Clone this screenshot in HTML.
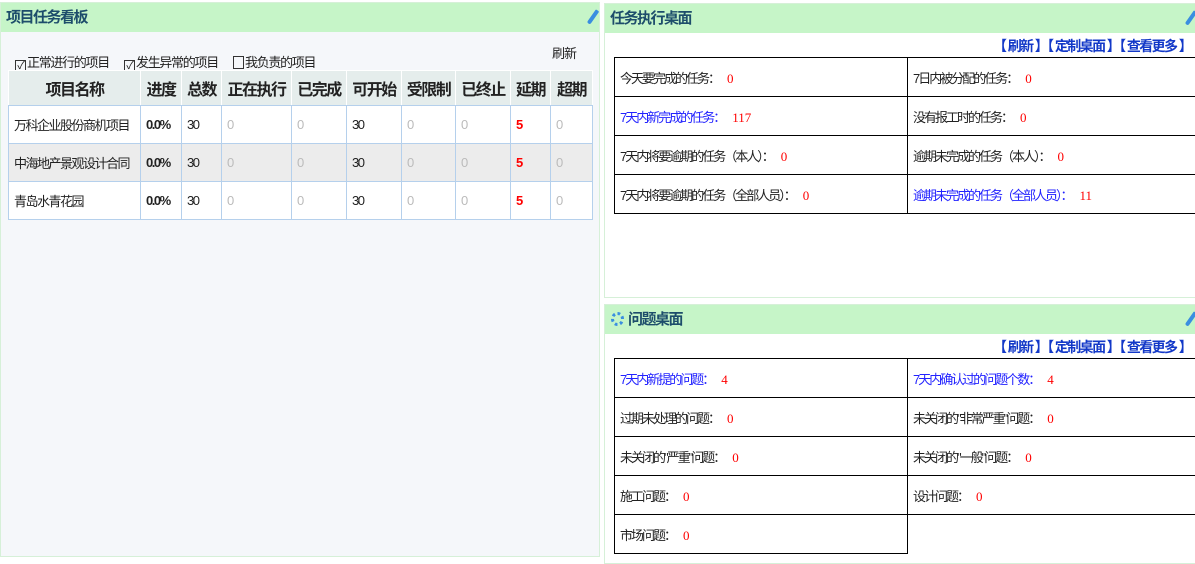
<!DOCTYPE html>
<html><head><meta charset="utf-8"><style>
*{margin:0;padding:0;box-sizing:border-box}
body{width:1195px;height:557px;overflow:hidden;background:#fff;font-family:"Liberation Sans","Noto Sans CJK SC",sans-serif;font-size:12px;color:#222;position:relative}
.abs{position:absolute}
.hdr{background:#c6f5c8;height:29px;font-weight:bold;font-size:15px;color:#1d4d6b;line-height:29px;padding-left:5px;letter-spacing:-1.5px}
.pen{position:absolute;right:4px;top:6px;width:4px;height:16px;background:#3a8ee0;transform:rotate(35deg);border-radius:1px 1px 2px 2px}
table{border-collapse:collapse;table-layout:fixed}
.lt td,.lt th{border:1px solid #b5d0ec;height:38px;padding-left:5px;text-align:left;letter-spacing:-1.5px;font-size:13px}
.lt th{background:#e5edec;font-size:16px;font-weight:bold;text-align:center;padding:0;height:35px;border-color:#fff #fff #b5d0ec #fff;color:#222;letter-spacing:-1.5px}
.lt tr.g td{background:#ececec}
.z{color:#bbb}.r{color:#f00;font-weight:bold}.b{font-weight:bold}
.rt td{border:1px solid #000;height:39px;padding-left:5px;font-size:13px;letter-spacing:-2px}
.red{color:#f00;margin-left:8px;font-family:"Liberation Serif",serif;letter-spacing:0}
.blue{color:#22f}
.links{position:absolute;left:388px;top:30px;white-space:nowrap;color:#1238c8;font-size:14px;font-weight:bold;letter-spacing:-1.6px;height:24px;line-height:24px}
.cb{display:inline-block;width:11px;height:13px;border:1px solid #333;vertical-align:-2px;margin-right:1px;font-size:11px;line-height:10px;text-align:center}
</style></head><body>
<div class="abs" style="left:0;top:2px;width:600px;height:555px;background:#f5f7fa;border:1px solid #d6f0d8">
 <div class="hdr">项目任务看板<span class="pen"></span></div>
 <div class="abs" style="left:14px;top:49px;letter-spacing:-1.3px;font-size:13px"><span class="cb">✓</span>正常进行的项目</div>
 <div class="abs" style="left:123px;top:49px;letter-spacing:-1.3px;font-size:13px"><span class="cb">✓</span>发生异常的项目</div>
 <div class="abs" style="left:232px;top:49px;letter-spacing:-1.3px;font-size:13px"><span class="cb"></span>我负责的项目</div>
 <div class="abs" style="left:551px;top:40px;letter-spacing:-1px;font-size:13px">刷新</div>
 <table class="lt abs" style="left:7px;top:67px;width:584px;background:#fff">
  <colgroup><col style="width:132px"><col style="width:41px"><col style="width:40px"><col style="width:70px"><col style="width:55px"><col style="width:55px"><col style="width:54px"><col style="width:55px"><col style="width:40px"><col style="width:42px"></colgroup>
  <tr><th>项目名称</th><th>进度</th><th>总数</th><th>正在执行</th><th>已完成</th><th>可开始</th><th>受限制</th><th>已终止</th><th>延期</th><th>超期</th></tr>
  <tr><td>万科企业股份商机项目</td><td class="b">0.0%</td><td>30</td><td class="z">0</td><td class="z">0</td><td>30</td><td class="z">0</td><td class="z">0</td><td class="r">5</td><td class="z">0</td></tr>
  <tr class="g"><td>中海地产景观设计合同</td><td class="b">0.0%</td><td>30</td><td class="z">0</td><td class="z">0</td><td>30</td><td class="z">0</td><td class="z">0</td><td class="r">5</td><td class="z">0</td></tr>
  <tr><td>青岛水青花园</td><td class="b">0.0%</td><td>30</td><td class="z">0</td><td class="z">0</td><td>30</td><td class="z">0</td><td class="z">0</td><td class="r">5</td><td class="z">0</td></tr>
 </table>
</div>
<div class="abs" style="left:604px;top:3px;width:594px;height:295px;background:#fff;border:1px solid #d6f0d8">
 <div class="hdr">任务执行桌面<span class="pen" style="right:4px"></span></div>
 <div class="links">【 刷新 】【 定制桌面 】【 查看更多 】</div>
 <table class="rt abs" style="left:9px;top:53px;width:600px">
  <colgroup><col style="width:293px"><col></colgroup>
  <tr><td>今天要完成的任务：<span class="red">0</span></td><td>7日内被分配的任务：<span class="red">0</span></td></tr>
  <tr><td class="blue">7天内新完成的任务：<span class="red">117</span></td><td>没有报工时的任务：<span class="red">0</span></td></tr>
  <tr><td>7天内将要逾期的任务（本人）：<span class="red">0</span></td><td>逾期未完成的任务（本人）：<span class="red">0</span></td></tr>
  <tr><td>7天内将要逾期的任务（全部人员）：<span class="red">0</span></td><td class="blue">逾期未完成的任务（全部人员）：<span class="red">11</span></td></tr>
 </table>
</div>
<div class="abs" style="left:604px;top:304px;width:594px;height:260px;background:#fff;border:1px solid #d6f0d8">
 <div class="hdr" style="padding-left:6px"><span style="display:inline-block;width:13px;height:14px;border:3px dotted #3a8ee0;border-radius:50%;vertical-align:-2px;margin-right:4px"></span>问题桌面<span class="pen" style="right:4px"></span></div>
 <div class="links">【 刷新 】【 定制桌面 】【 查看更多 】</div>
 <table class="rt abs" style="left:9px;top:53px;width:600px">
  <colgroup><col style="width:293px"><col></colgroup>
  <tr><td class="blue">7天内新提的问题：<span class="red">4</span></td><td class="blue">7天内确认过的问题个数：<span class="red">4</span></td></tr>
  <tr><td>过期未处理的问题：<span class="red">0</span></td><td>未关闭的"非常严重"问题：<span class="red">0</span></td></tr>
  <tr><td>未关闭的"严重"问题：<span class="red">0</span></td><td>未关闭的"一般"问题：<span class="red">0</span></td></tr>
  <tr><td>施工问题：<span class="red">0</span></td><td>设计问题：<span class="red">0</span></td></tr>
  <tr><td>市场问题：<span class="red">0</span></td><td style="border:none;border-top:1px solid #000"></td></tr>
 </table>
</div>
</body></html>
